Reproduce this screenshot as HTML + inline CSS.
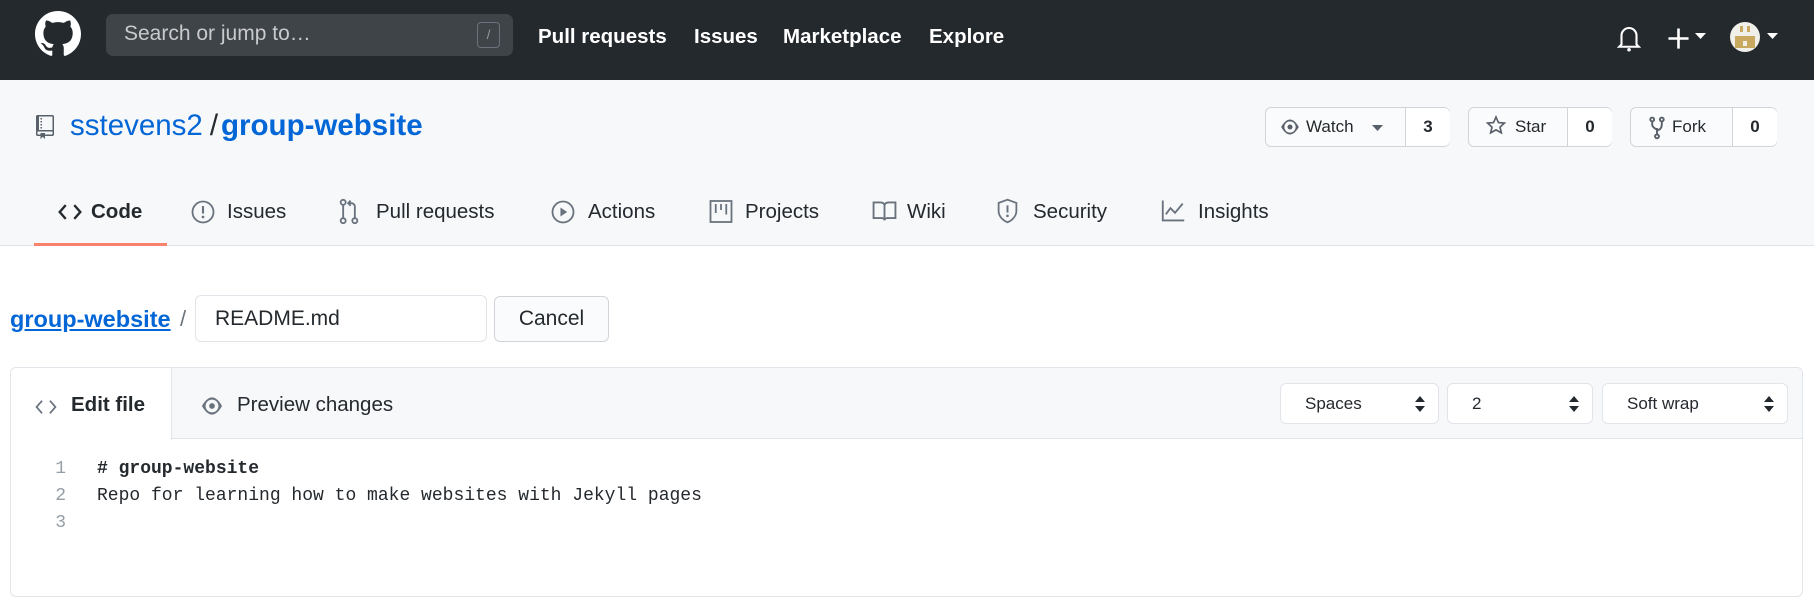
<!DOCTYPE html>
<html><head><meta charset="utf-8"><style>
*{box-sizing:border-box;margin:0;padding:0}
body{width:1814px;height:581px;overflow:hidden;background:#fff;font-family:"Liberation Sans",Arial,sans-serif;color:#24292e;position:relative}
.a{position:absolute}
.hdr{left:0;top:0;width:1814px;height:80px;background:#24292e}
.nav{color:#fff;font-weight:bold;font-size:20.5px;top:25px}
.rh{left:0;top:80px;width:1814px;height:166px;background:#f6f8fa;border-bottom:1px solid #e1e4e8}
.tab{font-size:20.5px;top:200px;color:#24292e}
.btn{border:1px solid #d1d5da;border-radius:6px;background:#fafbfc;height:40px;top:107px}
.cnt{position:absolute;top:0;height:38px;background:#fff;border-left:1px solid #d1d5da;font-weight:bold;font-size:17px;line-height:38px;text-align:center;border-radius:0 6px 6px 0}
.bt{position:absolute;top:0;font-size:17px;line-height:38px}
.sel{border:1px solid #e1e4e8;border-radius:6px;background:#fff;height:41px;top:383px;font-size:17px;line-height:39px;padding-left:24px}
.arr{position:absolute;right:12px;top:12px}
.mono{font-family:"Liberation Mono",monospace;font-size:18px}
svg{display:block}
</style></head><body>
<div class="a hdr"></div>
<svg class="a" style="left:35px;top:11px" width="46" height="46" viewBox="0 0 16 16"><path fill="#fff" d="M8 0C3.58 0 0 3.58 0 8c0 3.54 2.29 6.530 5.47 7.59.4.07.55-.17.55-.38 0-.19-.01-.82-.01-1.49-2.01.37-2.53-.49-2.690-.94-.09-.23-.48-.94-.82-1.130-.28-.15-.68-.52-.01-.53.63-.01 1.080.58 1.230.82.72 1.210 1.870.87 2.330.66.07-.52.28-.87.51-1.070-1.780-.2-3.640-.89-3.640-3.950 0-.87.31-1.590.82-2.150-.08-.2-.36-1.020.08-2.120 0 0 .67-.21 2.2.82.64-.18 1.320-.27 2-.27.68 0 1.360.09 2 .27 1.530-1.040 2.2-.82 2.2-.82.44 1.1.16 1.920.08 2.120.51.56.82 1.270.82 2.150 0 3.070-1.870 3.750-3.650 3.950.29.25.54.73.54 1.480 0 1.070-.01 1.930-.01 2.2 0 .21.15.46.55.38A8.013 8.013 0 0016 8c0-4.420-3.580-8-8-8z"/></svg>
<div class="a" style="left:106px;top:14px;width:407px;height:42px;background:#3f4448;border-radius:7px"></div>
<div class="a" style="left:124px;top:22px;color:#c8cacc;font-size:21px">Search or jump to…</div>
<div class="a" style="left:477px;top:22px;width:23px;height:26px;border:1px solid #6a737d;border-radius:4px;color:#959da5;font-size:13px;text-align:center;line-height:24px">/</div>
<div class="a nav" style="left:538px">Pull requests</div>
<div class="a nav" style="left:694px">Issues</div>
<div class="a nav" style="left:783px">Marketplace</div>
<div class="a nav" style="left:929px">Explore</div>
<svg class="a" style="left:1617px;top:25px" width="24" height="27" viewBox="0 0 16 18"><path fill="none" stroke="#fff" stroke-width="1.4" d="M3 13V7a5 5 0 0110 0v6l1.5 1.5h-13z"/><circle cx="8" cy="16.5" r="1.2" fill="#fff"/></svg>
<svg class="a" style="left:1667px;top:27px" width="23" height="23" viewBox="0 0 16 16"><path stroke="#fff" stroke-width="1.8" d="M8 1v14M1 8h14"/></svg>
<svg class="a" style="left:1695px;top:33px" width="11" height="7"><path d="M0 0h11L5.5 6z" fill="#fff"/></svg>
<svg class="a" style="left:1730px;top:22px" width="30" height="30" viewBox="0 0 30 30"><circle cx="15" cy="15" r="15" fill="#f0efe9"/><rect x="5" y="14" width="20" height="12" fill="#c9a860"/><rect x="10" y="4" width="3" height="6" fill="#c9a860"/><rect x="17" y="4" width="3" height="6" fill="#c9a860"/><rect x="13" y="19" width="4" height="5" fill="#f0efe9"/></svg>
<svg class="a" style="left:1767px;top:33px" width="11" height="7"><path d="M0 0h11L5.5 6z" fill="#fff"/></svg>

<div class="a rh"></div>
<svg class="a" style="left:35px;top:115px" width="20" height="24" viewBox="0 0 12 16"><path fill="#586069" d="M4 9H3V8h1v1zm0-3H3v1h1V6zm0-2H3v1h1V4zm0-2H3v1h1V2zm8-1v12c0 .55-.45 1-1 1H6v2l-1.5-1.5L3 16v-2H1c-.55 0-1-.45-1-1V1c0-.55.45-1 1-1h10c.55 0 1 .45 1 1zm-1 10H1v2h2v-1h3v1h5v-2zm0-10H2v9h9V1z"/></svg>
<div class="a" style="left:70px;top:109px;font-size:29.5px;color:#0366d6">sstevens2<span style="color:#24292e;margin:0 3px 0 7px">/</span><b>group-website</b></div>

<div class="a btn" style="left:1265px;width:185px"><svg class="a" style="left:14px;top:10px" width="20" height="18" viewBox="0 0 16 14"><path fill="#586069" d="M8 1C4 1 1 7 1 7s3 6 7 6 7-6 7-6-3-6-7-6zm0 10.5A4.5 4.5 0 118 2.5a4.5 4.5 0 010 9zM8 5a2 2 0 100 4 2 2 0 000-4z"/></svg><span class="bt" style="left:40px">Watch</span><svg class="a" style="left:106px;top:17px" width="11" height="7"><path d="M0 0h11L5.5 6z" fill="#586069"/></svg><div class="cnt" style="left:139px;width:45px">3</div></div>
<div class="a btn" style="left:1468px;width:144px"><svg class="a" style="left:17px;top:7px" width="20" height="22" viewBox="0 0 14 16"><path fill="none" stroke="#586069" stroke-width="1.2" d="M7 1.5l1.8 4 4.3.4-3.2 2.9 1 4.2L7 10.8 3.1 13l1-4.2L.9 5.9l4.3-.4z"/></svg><span class="bt" style="left:46px">Star</span><div class="cnt" style="left:98px;width:45px">0</div></div>
<div class="a btn" style="left:1630px;width:147px"><svg class="a" style="left:18px;top:7px" width="16" height="26" viewBox="0 0 10 16"><path fill="none" stroke="#586069" stroke-width="1.2" d="M2 1.5a1.2 1.2 0 100 2.4 1.2 1.2 0 000-2.4zM8 1.5a1.2 1.2 0 100 2.4 1.2 1.2 0 000-2.4zM5 12a1.2 1.2 0 100 2.4 1.2 1.2 0 000-2.4zM2 4v2c0 1 1 2 3 3s3-2 3-3V4M5 8v4"/></svg><span class="bt" style="left:41px">Fork</span><div class="cnt" style="left:101px;width:45px">0</div></div>

<div class="a" style="left:34px;top:243px;width:133px;height:3px;background:#f9826c"></div>
<svg class="a" style="left:58px;top:203px" width="24" height="18" viewBox="0 0 14 10"><path fill="none" stroke="#24292e" stroke-width="1.4" d="M4.5 1L1 5l3.5 4M9.5 1L13 5l-3.5 4"/></svg>
<div class="a tab" style="left:91px;font-weight:bold">Code</div>
<svg class="a" style="left:191px;top:200px" width="24" height="24" viewBox="0 0 16 16"><circle cx="8" cy="8" r="7" fill="none" stroke="#6a737d" stroke-width="1.2"/><path stroke="#6a737d" stroke-width="1.4" d="M8 4v5"/><circle cx="8" cy="11.3" r=".9" fill="#6a737d"/></svg>
<div class="a tab" style="left:227px">Issues</div>
<svg class="a" style="left:339px;top:198px" width="20" height="27" viewBox="0 0 12 16"><g fill="none" stroke="#6a737d" stroke-width="1.1"><circle cx="2.5" cy="2.5" r="1.5"/><circle cx="2.5" cy="13.5" r="1.5"/><circle cx="9.5" cy="13.5" r="1.5"/><path d="M2.5 4v8M9.5 12V5c0-1-1-2-2-2H6M7 1.5L5.5 3 7 4.5"/></g></svg>
<div class="a tab" style="left:376px">Pull requests</div>
<svg class="a" style="left:551px;top:200px" width="24" height="24" viewBox="0 0 16 16"><circle cx="8" cy="8" r="7" fill="none" stroke="#6a737d" stroke-width="1.2"/><path fill="#6a737d" d="M6.3 5v6l4.5-3z"/></svg>
<div class="a tab" style="left:588px">Actions</div>
<svg class="a" style="left:709px;top:199px" width="24" height="25" viewBox="0 0 16 16"><rect x="1" y="1" width="14" height="14" fill="none" stroke="#6a737d" stroke-width="1.2"/><path stroke="#6a737d" stroke-width="1.2" d="M4.5 3v6M8 3v4M11.5 3v7"/></svg>
<div class="a tab" style="left:745px">Projects</div>
<svg class="a" style="left:872px;top:200px" width="25" height="22" viewBox="0 0 16 14"><path fill="none" stroke="#6a737d" stroke-width="1.2" d="M1 1.5h4.5c1.5 0 2.5 1 2.5 2V13c0-1-1-1.5-2-1.5H1zM15 1.5h-4.5c-1.5 0-2.5 1-2.5 2V13c0-1 1-1.5 2-1.5H15z"/></svg>
<div class="a tab" style="left:907px">Wiki</div>
<svg class="a" style="left:997px;top:198px" width="21" height="26" viewBox="0 0 13 16"><path fill="none" stroke="#6a737d" stroke-width="1.1" d="M6.5 1L1 3v5c0 3.5 3 6 5.5 7 2.5-1 5.5-3.5 5.5-7V3z"/><path stroke="#6a737d" stroke-width="1.2" d="M6.5 4.5V9"/><circle cx="6.5" cy="11" r=".8" fill="#6a737d"/></svg>
<div class="a tab" style="left:1033px">Security</div>
<svg class="a" style="left:1161px;top:199px" width="25" height="23" viewBox="0 0 16 15"><path fill="none" stroke="#6a737d" stroke-width="1.2" d="M1 1v13h14M3 10l3-4 3 3 5-6"/></svg>
<div class="a tab" style="left:1198px">Insights</div>

<div class="a" style="left:10px;top:306px;font-size:23.5px;font-weight:bold;color:#0366d6;text-decoration:underline">group-website</div>
<div class="a" style="left:180px;top:306px;font-size:22px;color:#6a737d">/</div>
<div class="a" style="left:195px;top:295px;width:292px;height:47px;border:1px solid #e1e4e8;border-radius:6px;font-size:21px;line-height:45px;padding-left:19px">README.md</div>
<div class="a" style="left:494px;top:296px;width:115px;height:46px;border:1px solid #d1d5da;border-radius:6px;background:#fafbfc;font-size:21px;line-height:44px;text-align:center">Cancel</div>

<div class="a" style="left:10px;top:367px;width:1793px;height:230px;border:1px solid #e1e4e8;border-radius:6px;overflow:hidden">
<div class="a" style="left:0;top:0;width:1793px;height:71px;background:#f6f8fa;border-bottom:1px solid #e1e4e8"></div>
<div class="a" style="left:0;top:0;width:161px;height:72px;background:#fff;border-right:1px solid #e1e4e8"></div>
</div>
<svg class="a" style="left:35px;top:398px" width="22" height="18" viewBox="0 0 14 10"><path fill="none" stroke="#6a737d" stroke-width="1.1" d="M4.5 1L1 5l3.5 4M9.5 1L13 5l-3.5 4"/></svg>
<div class="a" style="left:71px;top:393px;font-size:20.5px;font-weight:bold">Edit file</div>
<svg class="a" style="left:200px;top:396px" width="24" height="20" viewBox="0 0 16 14"><path fill="#6a737d" d="M8 1C4 1 1 7 1 7s3 6 7 6 7-6 7-6-3-6-7-6zm0 10.5A4.5 4.5 0 118 2.5a4.5 4.5 0 010 9zM8 5a2 2 0 100 4 2 2 0 000-4z"/></svg>
<div class="a" style="left:237px;top:393px;font-size:20.5px">Preview changes</div>
<div class="a sel" style="left:1280px;width:159px">Spaces<svg class="arr" width="12" height="16"><path d="M6 0l5 6H1zM6 16l5-6H1z" fill="#24292e"/></svg></div>
<div class="a sel" style="left:1447px;width:146px">2<svg class="arr" width="12" height="16"><path d="M6 0l5 6H1zM6 16l5-6H1z" fill="#24292e"/></svg></div>
<div class="a sel" style="left:1602px;width:186px">Soft wrap<svg class="arr" width="12" height="16"><path d="M6 0l5 6H1zM6 16l5-6H1z" fill="#24292e"/></svg></div>

<div class="a mono" style="left:52px;top:456px;color:#959da5;line-height:27px;text-align:right;width:14px">1<br>2<br>3</div>
<div class="a mono" style="left:97px;top:456px;line-height:27px;white-space:pre"><b># group-website</b>
Repo for learning how to make websites with Jekyll pages</div>
</body></html>
